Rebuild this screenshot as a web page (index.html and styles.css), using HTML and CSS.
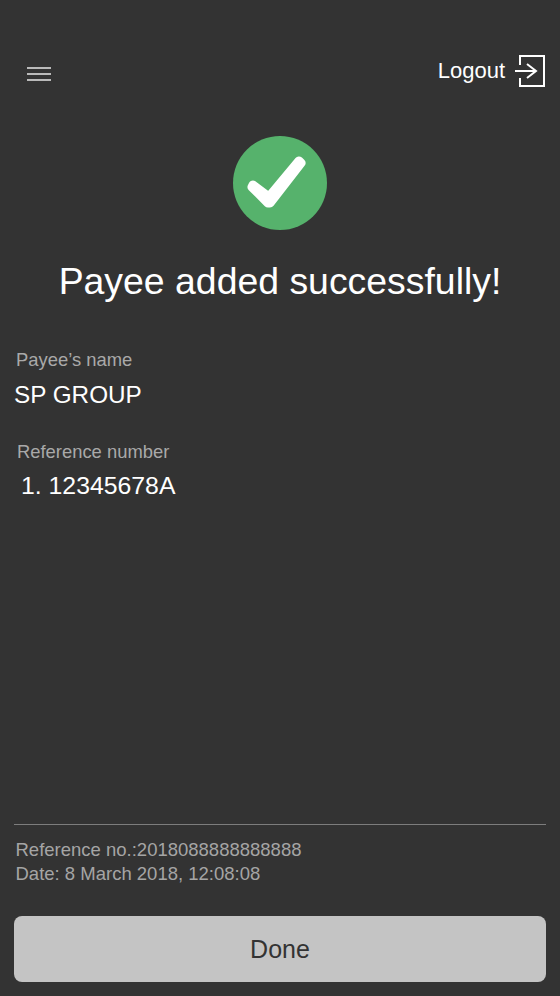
FILE: index.html
```html
<!DOCTYPE html>
<html lang="en">
<head>
<meta charset="utf-8">
<title>Payee added</title>
<link rel="stylesheet" href="styles.css">
</head>
<body>
<div class="screen">
  <header class="topbar">
    <svg class="menu-icon" width="24" height="14" viewBox="0 0 24 14" aria-hidden="true">
      <path d="M0 1H24M0 7H24M0 13H24" stroke="#e8e8e8" stroke-width="1.6" fill="none"/>
    </svg>
    <div class="logout">
      <span class="logout-text">Logout</span>
      <svg class="logout-icon" width="32" height="32" viewBox="0 0 32 32" aria-hidden="true">
        <path d="M6 10V1H30V31H6V23" stroke="#fff" stroke-width="2" fill="none"/>
        <path d="M1 16H21M13 9L22 16L13 23" stroke="#fff" stroke-width="2" fill="none"/>
      </svg>
    </div>
  </header>
  <div class="status">
    <svg class="check" width="96" height="96" viewBox="0 0 96 96" aria-hidden="true">
      <circle cx="48" cy="48" r="47" fill="#56b26c"/>
      <path d="M21 50L37 62L67 26L69 28L38 68L36 68L20 52Z" fill="#fff" stroke="#fff" stroke-width="9" stroke-linejoin="round"/>
    </svg>
    <h1 class="title">Payee added successfully!</h1>
  </div>
  <section class="details">
    <div class="field field-name">
      <div class="label">Payee’s name</div>
      <div class="value">SP GROUP</div>
    </div>
    <div class="field field-ref">
      <div class="label">Reference number</div>
      <div class="value value-ref">1. 12345678A</div>
    </div>
  </section>
  <footer class="footer">
    <div class="meta">
      <div>Reference no.:2018088888888888</div>
      <div>Date: 8 March 2018, 12:08:08</div>
    </div>
    <button class="done" type="button">Done</button>
  </footer>
</div>
</body>
</html>
```
FILE: styles.css
```css
* { box-sizing: border-box; }
html, body { margin: 0; padding: 0; }
body {
  background: #333333;
  font-family: "Liberation Sans", Arial, sans-serif;
  color: #fff;
}
.screen {
  width: 560px;
  height: 996px;
  display: flex;
  flex-direction: column;
  padding: 0 14px 14px;
  overflow: hidden;
}
.topbar {
  display: flex;
  justify-content: space-between;
  align-items: flex-start;
  padding: 55px 0 0 13px;
  height: 135px;
}
.menu-icon { margin-top: 12px; display: block; }
.logout { display: flex; align-items: center; gap: 9px; }
.logout-text { font-size: 22px; color: #fff; }
.logout-icon { display: block; }
.status { display: flex; flex-direction: column; align-items: center; }
.check { display: block; }
.title {
  margin: 26px 0 0;
  font-size: 37.4px;
  line-height: 48px;
  font-weight: 400;
  color: #fff;
}
.details { margin-top: 43px; flex: 1; }
.field-name { padding-left: 2px; }
.field-ref { margin-top: 29px; padding-left: 3px; }
.label { font-size: 18.4px; line-height: 24px; color: #a9a9a9; }
.value { font-size: 24.3px; line-height: 32px; color: #fff; margin-top: 7px; margin-left: -2px; }
.value-ref { font-size: 24.8px; margin-left: 4px; margin-top: 6px; }
.footer { display: flex; flex-direction: column; }
.meta {
  border-top: 1px solid #7d7d7d;
  padding: 13px 1px 0 1.5px;
  font-size: 18.5px;
  line-height: 24px;
  color: #a5a5a5;
}
.done {
  margin-top: 30px;
  height: 66px;
  width: 100%;
  border: 0;
  border-radius: 8px;
  background: #c4c4c4;
  color: #333;
  font-family: inherit;
  font-size: 25px;
  padding: 0;
}
```
